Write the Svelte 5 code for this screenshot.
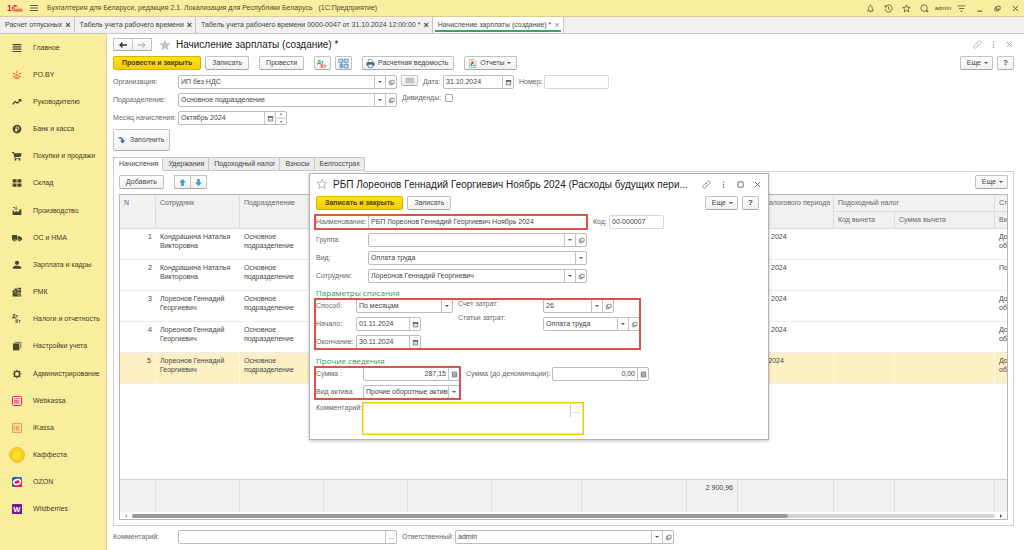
<script lang="ts">
	type Section = { icon: string; title: string };
	type Row = { employee: string; department: string; period: string; extra: string };

	const openTabs = [
		{ title: 'Расчет отпускных', active: false },
		{ title: 'Табель учета рабочего времени', active: false },
		{ title: 'Табель учета рабочего времени 0000-0047 от 31.10.2024 12:00:00 *', active: false },
		{ title: 'Начисление зарплаты (создание) *', active: true }
	];

	const sections: Section[] = [
		{ icon: 'menu', title: 'Главное' },
		{ icon: 'poby', title: 'PO.BY' },
		{ icon: 'trend', title: 'Руководителю' },
		{ icon: 'coin', title: 'Банк и касса' },
		{ icon: 'cart', title: 'Покупки и продажи' },
		{ icon: 'boxes', title: 'Склад' },
		{ icon: 'factory', title: 'Производство' },
		{ icon: 'truck', title: 'ОС и НМА' },
		{ icon: 'person', title: 'Зарплата и кадры' },
		{ icon: 'register', title: 'РМК' },
		{ icon: 'dtkt', title: 'Налоги и отчетность' },
		{ icon: 'books', title: 'Настройки учета' },
		{ icon: 'gear', title: 'Администрирование' },
		{ icon: 'webkassa', title: 'Webkassa' },
		{ icon: 'ikassa', title: 'iKassa' },
		{ icon: 'kaffesta', title: 'Каффеста' },
		{ icon: 'ozon', title: 'OZON' },
		{ icon: 'wildberries', title: 'Wildberries' }
	];

	const pageTabs = ['Начисления', 'Удержания', 'Подоходный налог', 'Взносы', 'Белгосстрах'];
	let currentTab = $state('Начисления');

	const rows: Row[] = [
		{ employee: 'Кондрашина Наталья Викторовна', department: 'Основное подразделение', period: 'Октябрь 2024', extra: 'До об' },
		{ employee: 'Кондрашина Наталья Викторовна', department: 'Основное подразделение', period: 'Октябрь 2024', extra: 'По' },
		{ employee: 'Лореонов Геннадий Георгиевич', department: 'Основное подразделение', period: 'Октябрь 2024', extra: 'До об' },
		{ employee: 'Лореонов Геннадий Георгиевич', department: 'Основное подразделение', period: 'Октябрь 2024', extra: 'До об' },
		{ employee: 'Лореонов Геннадий Георгиевич', department: 'Основное подразделение', period: 'Ноябрь 2024', extra: 'До об' }
	];
	let selectedRow = $state(4);
	let dividends = $state(false);
</script>

{#snippet sectionIcon(name: string)}
	<svg class="section-icon" class:large={name === 'kaffesta'} viewBox="0 0 16 16" aria-hidden="true">
		{#if name === 'menu'}
			<path d="M1 2.5h14M1 6.2h14M1 9.8h14M1 13.5h14" stroke="#4a452c" stroke-width="1.8" />
		{:else if name === 'poby'}
			<path d="M8 1v4M8 11v4M1.5 5l4 1.8M10.5 9.2l4 2M14.5 5l-4 1.8M5.5 9.2l-4 2M5 14l1.5-3M11 14l-1.5-3" stroke="#e0432d" stroke-width="1.5" fill="none" />
			<circle cx="8" cy="8" r="1.4" fill="#e0432d" />
		{:else if name === 'trend'}
			<path d="M1 12l4-5 3.5 3L14 4" stroke="#4a452c" stroke-width="2" fill="none" />
			<path d="M9.5 3H15v5.5z" fill="#4a452c" />
		{:else if name === 'coin'}
			<circle cx="8" cy="8" r="7" fill="#4a452c" />
			<path d="M6.5 12.5V4.5h2.3a2 2 0 0 1 0 4.2H5M5 10.6h4" stroke="#fbed9e" stroke-width="1.4" fill="none" />
		{:else if name === 'cart'}
			<path d="M0 1.5h3l.6 2h11.900l-1.800 6H5.200l.4 1.500h8v1.500H4.200L2 3H0z" fill="#4a452c" />
			<circle cx="5.500" cy="14" r="1.500" fill="#4a452c" />
			<circle cx="12" cy="14" r="1.500" fill="#4a452c" />
		{:else if name === 'boxes'}
			<path d="M1 2h6.300v5.300H1zM8.700 2H15v5.300H8.700zM1 8.700h6.300V14H1zM8.700 8.700H15V14H8.700z" fill="#4a452c" />
		{:else if name === 'factory'}
			<path d="M1 14.500V7h2l.5 3L8 7.500V10l4-2.500V5h3v9.500z" fill="#4a452c" />
			<path d="M2 2.500h3M6 1.500h2M4 4.800h5" stroke="#4a452c" stroke-width="1.500" />
		{:else if name === 'truck'}
			<path d="M0 3h8.500v8.500H0zM9.300 5H13l3 3v3.500H9.300z" fill="#4a452c" />
			<circle cx="4" cy="12" r="1.800" fill="#4a452c" stroke="#fbed9e" stroke-width=".6" />
			<circle cx="12" cy="12" r="1.800" fill="#4a452c" stroke="#fbed9e" stroke-width=".6" />
		{:else if name === 'person'}
			<circle cx="8" cy="4.500" r="3.300" fill="#4a452c" />
			<path d="M1.500 14v-2.500c1.500-2 3.500-2.500 4.500-2.500h4c1 0 3 .5 4.500 2.500V14z" fill="#4a452c" />
		{:else if name === 'register'}
			<path d="M1 5h3V2.500h4V5H9V1h5.500v14H1z" fill="#4a452c" />
			<path d="M3 7.500h4M10.500 3v3M12.500 3v3M3 10h1.500M6 10h1.500M9.500 9h3.500v4H9.500z" stroke="#fbed9e" stroke-width="1" fill="none" />
		{:else if name === 'dtkt'}
			<text x="0" y="7" font-size="8" font-weight="bold" fill="#4a452c">Дт</text>
			<text x="5" y="15" font-size="8" font-weight="bold" fill="#4a452c">Кт</text>
		{:else if name === 'books'}
			<path d="M5 1h10v11h-2V3H5z" fill="#8f8758" />
			<path d="M1.500 3.800h10.300V15H1.500z" fill="#4a452c" />
		{:else if name === 'gear'}
			<circle cx="8" cy="8" r="4.200" fill="none" stroke="#4a452c" stroke-width="2" />
			<path d="M8 1v3M8 12v3M1 8h3M12 8h3M3 3l2.200 2.200M10.800 10.800L13 13M13 3l-2.200 2.200M5.200 10.800L3 13" stroke="#4a452c" stroke-width="1.900" />
		{:else if name === 'webkassa'}
			<rect x=".8" y=".8" width="14.400" height="14.400" rx="2" fill="#fdebe9" stroke="#e8203c" stroke-width="1.600" />
			<path d="M3 4h10M3 7.500h7M3 10.500h7M4.500 6v7M8 6v7M11 6v7" stroke="#e8203c" stroke-width="1" />
		{:else if name === 'ikassa'}
			<rect x=".8" y=".8" width="14.400" height="14.400" rx="1" fill="#fbdf94" stroke="#e58a55" stroke-width="1.300" />
			<text x="5.500" y="12" font-size="11" fill="#e2703f">K</text>
			<path d="M3.300 4.500v8" stroke="#e2703f" stroke-width="1" />
		{:else if name === 'kaffesta'}
			<circle cx="8" cy="8" r="7.400" fill="#fbd51f" stroke="#e5b51a" stroke-width=".9" />
			<circle cx="8" cy="8" r="5" fill="#fde025" stroke="#edbd1b" stroke-width=".7" />
		{:else if name === 'ozon'}
			<rect width="16" height="16" rx="3" fill="#2558b8" />
			<path d="M16 8v5a3 3 0 0 1-3 3H5z" fill="#ee1c53" />
			<ellipse cx="8" cy="8" rx="7" ry="5.200" fill="#fff" transform="rotate(-18 8 8)" />
			<ellipse cx="8" cy="8" rx="4.500" ry="2.600" fill="#ee1c53" transform="rotate(-18 8 8)" />
		{:else if name === 'wildberries'}
			<rect width="16" height="16" rx="1" fill="#7b1a8e" />
			<path d="M11 16l5-6v6z" fill="#2f3a63" />
			<text x="2" y="12" font-size="12" font-weight="bold" fill="#fff">W</text>
		{/if}
	</svg>
{/snippet}

{#snippet caret()}
	<svg class="caret" viewBox="0 0 4 2" aria-hidden="true"><path d="M0 0h4L2 2z" fill="#555" /></svg>
{/snippet}

{#snippet openButton(title: string)}
	<button class="addon" aria-label="Открыть: {title}">
		<svg viewBox="0 0 8 8" aria-hidden="true">
			<path d="M3 1.500h4v3.500H3zM3 3H1.500v3.500H5V5" fill="none" stroke="#777" stroke-width=".9" />
		</svg>
	</button>
{/snippet}

{#snippet calendarButton()}
	<button class="addon" aria-label="Выбрать дату">
		<svg viewBox="0 0 8 8" aria-hidden="true">
			<path d="M1.500 2h5v4.800h-5z" fill="#fff" stroke="#666" stroke-width=".9" />
			<path d="M1 1.200h6v2H1z" fill="#666" />
			<path d="M2.500 4.800h3" stroke="#999" stroke-width=".8" />
		</svg>
	</button>
{/snippet}

{#snippet calculatorButton()}
	<button class="addon" aria-label="Калькулятор">
		<svg viewBox="0 0 8 8" aria-hidden="true">
			<path d="M1.500 1.300h5v5.400h-5z" fill="#ddd" stroke="#666" stroke-width=".9" />
			<path d="M1.500 2.200h5M2 4.200h4M2 5.600h4" stroke="#777" stroke-width=".8" />
		</svg>
	</button>
{/snippet}

{#snippet choice(id: string, value: string)}
	<span class="choice">
		<select {id}><option>{value}</option></select>
		<span class="choice-mark">{@render caret()}</span>
	</span>
{/snippet}

{#snippet linkIcon()}
	<svg class="tool-icon" viewBox="0 0 12 12" aria-hidden="true">
		<path d="M5 4.500l2.500-2.800c1-1 2-.6 2.700 0s1 1.700.1 2.700L8 6.800c-.9.900-1.900.8-2.600.1M7 7.500l-2.500 2.800c-1 1-2 .6-2.700 0s-1-1.700-.1-2.700L4 5.200c.9-.9 1.900-.8 2.600-.1" fill="none" stroke="currentColor" stroke-width=".9" />
	</svg>
{/snippet}

{#snippet moreIcon()}
	<svg class="tool-icon" viewBox="0 0 12 12" aria-hidden="true">
		<path d="M5.200 2h1.600v1.800H5.200zM5.200 5.200h1.600V7H5.200zM5.200 8.400h1.600v1.800H5.200z" fill="currentColor" />
	</svg>
{/snippet}

{#snippet crossIcon()}
	<svg class="tool-icon" viewBox="0 0 12 12" aria-hidden="true">
		<path d="M2.500 2.500l7 7M9.500 2.500l-7 7" stroke="currentColor" stroke-width="1.200" />
	</svg>
{/snippet}

<div class="app">
	<header class="titlebar">
		<svg class="logo" viewBox="0 0 32 16" role="img" aria-label="1С">
			<text x="0" y="14" font-size="17" font-weight="bold" fill="#d8232a">1</text>
			<path d="M21 5.500a5.500 5.500 0 1 0-4 8.300h14" fill="none" stroke="#d8232a" stroke-width="2" />
			<path d="M19 6.500a2.800 2.800 0 1 0-2 4h14" fill="none" stroke="#d8232a" stroke-width="1.500" />
		</svg>
		<button class="bare" aria-label="Главное меню">
			<svg class="burger" viewBox="0 0 8 8" aria-hidden="true"><path d="M0 1.500h8M0 4h8M0 6.500h8" stroke="#5a5233" stroke-width=".9" /></svg>
		</button>
		<span class="app-name">Бухгалтерия для Беларуси, редакция 2.1. Локализация для Республики Беларусь &nbsp; (1С:Предприятие)</span>
		<div class="title-tools">
			<button class="bare" aria-label="Уведомления">
				<svg class="tool-icon" viewBox="0 0 12 12"><path d="M2 9.300c1.500-1.300 1.500-2.500 1.800-4.500C4 3 5 2 6 2s2 1 2.200 2.800c.3 2 .3 3.200 1.800 4.500zM5 10.500h2M6 1v1" fill="none" stroke="currentColor" /></svg>
			</button>
			<button class="bare" aria-label="История">
				<svg class="tool-icon" viewBox="0 0 12 12"><path d="M2 3.500a4.800 4.800 0 1 1-.7 3M1.500 1.500v2.500H4M6 3.500v3l2 1.200" fill="none" stroke="currentColor" /></svg>
			</button>
			<button class="bare" aria-label="Избранное">
				<svg class="tool-icon" viewBox="0 0 12 12"><path d="M6 1.200l1.400 3.200 3.500.3-2.700 2.300.9 3.500L6 8.600l-3.100 1.900.9-3.500L1.100 4.700l3.500-.3z" fill="none" stroke="currentColor" /></svg>
			</button>
			<button class="bare" aria-label="Поиск">
				<svg class="tool-icon" viewBox="0 0 12 12"><circle cx="5.500" cy="5.500" r="4.300" fill="none" stroke="currentColor" /><path d="M8.500 8.500l2.300 2.300" stroke="currentColor" stroke-width="1.600" /></svg>
			</button>
			<span class="user">admin</span>
			<button class="bare" aria-label="Сервис">
				<svg class="tool-icon" viewBox="0 0 12 12"><path d="M1 2.500h10M2.500 6h7" stroke="currentColor" /><path d="M4.500 9h3L6 11z" fill="currentColor" /></svg>
			</button>
			<button class="bare" aria-label="Свернуть">
				<svg class="tool-icon" viewBox="0 0 12 12"><path d="M3 9.500h6.500" stroke="currentColor" stroke-width="1.300" /></svg>
			</button>
			<button class="bare" aria-label="Восстановить">
				<svg class="tool-icon" viewBox="0 0 12 12"><path d="M4.500 3h5v4h-5zM4.500 5h-2v4h5V7" fill="none" stroke="currentColor" /></svg>
			</button>
			<button class="bare" aria-label="Закрыть">{@render crossIcon()}</button>
		</div>
	</header>

	<nav class="open-tabs">
		{#each openTabs as tab}
			<div class="open-tab" class:active={tab.active}>
				<a href="#tab">{tab.title}</a>
				<button class="bare tab-close" aria-label="Закрыть">×</button>
			</div>
		{/each}
	</nav>

	<div class="workspace">
		<nav class="sidebar">
			{#each sections as section}
				<a class="section" href="#section">
					<span class="section-mark">{@render sectionIcon(section.icon)}</span>
					{section.title}
				</a>
			{/each}
		</nav>

		<main class="document">
			<div class="heading">
				<div class="joined">
					<button class="btn" aria-label="Назад">
						<svg class="nav-arrow" viewBox="0 0 8 6"><path d="M8 3H1M3.500.5L1 3l2.500 2.500" fill="none" stroke="#333" stroke-width="1.300" /></svg>
					</button>
					<button class="btn" aria-label="Вперед">
						<svg class="nav-arrow" viewBox="0 0 8 6"><path d="M0 3h7M4.500.5L7 3 4.500 5.500" fill="none" stroke="#999" /></svg>
					</button>
				</div>
				<svg class="star" viewBox="0 0 12 12" aria-hidden="true"><path d="M6 .5l1.600 3.800 4.100.3-3.100 2.700 1 4L6 9.200l-3.600 2.100 1-4L.3 4.600l4.100-.3z" fill="#c4c4c4" /></svg>
				<h1>Начисление зарплаты (создание) *</h1>
				<div class="form-tools">
					<button class="bare" aria-label="Ссылка">{@render linkIcon()}</button>
					<button class="bare" aria-label="Еще">{@render moreIcon()}</button>
					<button class="bare" aria-label="Закрыть">{@render crossIcon()}</button>
				</div>
			</div>

			<div class="commands">
				<button class="btn primary">Провести и закрыть</button>
				<button class="btn">Записать</button>
				<button class="btn spaced">Провести</button>
				<button class="btn square spaced" aria-label="Дт Кт">
					<svg viewBox="0 0 16 16"><text x="0" y="8" font-size="8" font-weight="bold" fill="#3a9a62">Дт</text><text x="5" y="15" font-size="8" font-weight="bold" fill="#d8453a">Кт</text></svg>
				</button>
				<button class="btn square" aria-label="Структура подчиненности">
					<svg viewBox="0 0 16 16"><path d="M1 1.500h6v5H1zM9 1.500h6v5H9zM9 9.500h6v5H9z" fill="#c3dcf0" stroke="#4b86b4" /><path d="M3 9h4v5H3zM7 4h2M12 6.500v3M5 6.500V9" fill="#7fb0d6" stroke="#4b86b4" /></svg>
				</button>
				<button class="btn spaced icon-text">
					<svg viewBox="0 0 16 16" aria-hidden="true"><path d="M4 1h6l2 2v3H4z" fill="#fff" stroke="#4d6478" /><path d="M1 6h14v6H1z" fill="#44617c" /><path d="M4 9.500h8V15H4z" fill="#e8f0f7" stroke="#44617c" /></svg>
					Расчетная ведомость
				</button>
				<button class="btn spaced icon-text">
					<svg viewBox="0 0 16 16" aria-hidden="true"><path d="M3 1h8l3 3v11H3z" fill="#fff" stroke="#888" /><path d="M5 8h2.500v5H5zM9 10h3v3H9z" fill="#3a9a62" /><path d="M6 4h4v5H6z" fill="#d8453a" /></svg>
					Отчеты {@render caret()}
				</button>
				<div class="commands-end">
					<button class="btn more">Еще {@render caret()}</button>
					<button class="btn square help">?</button>
				</div>
			</div>

			<div class="fields">
				<div class="line">
					<label class="lead" for="organization">Организация:</label>
					<div class="field ref">{@render choice('organization', 'ИП без НДС')}{@render openButton('Организация')}</div>
					<button class="btn mini" aria-label="Реквизиты">
						<svg viewBox="0 0 12 8"><path d="M1 1h10v6H1z" fill="#ddd" stroke="#aaa" stroke-width=".8" /><path d="M2.500 3h7M2.500 5h7" stroke="#999" stroke-width=".8" /></svg>
					</button>
					<label class="date-label" for="date">Дата:</label>
					<div class="field date"><input id="date" value="31.10.2024" />{@render calendarButton()}</div>
					<label class="number-label" for="number">Номер:</label>
					<div class="field number readonly"><input id="number" value="" readonly /></div>
				</div>
				<div class="line">
					<label class="lead" for="department">Подразделение:</label>
					<div class="field ref">{@render choice('department', 'Основное подразделение')}{@render openButton('Подразделение')}</div>
					<div class="check">
						<label for="dividends">Дивиденды:</label>
						<input id="dividends" type="checkbox" bind:checked={dividends} />
					</div>
				</div>
				<div class="line">
					<label class="lead" for="month">Месяц начисления:</label>
					<div class="field month">
						<input id="month" value="Октябрь 2024" />
						{@render calendarButton()}
						<button class="addon" aria-label="Изменить месяц">
							<svg viewBox="0 0 8 12"><path d="M3 2.500h2L4 1.500zM3 9.500h2l-1 1z" fill="#666" stroke="#666" stroke-width=".5" /><path d="M0 6h8" stroke="#bbb" /></svg>
						</button>
					</div>
				</div>
			</div>

			<button class="btn fill">
				<svg viewBox="0 0 16 16" aria-hidden="true"><path d="M1 3c5-2 10 0 10 6h3.500L9 15 4 9h3.200C7.200 6 5 4 1 6z" fill="#2f6fa8" /></svg>
				Заполнить
			</button>

			<div class="page-tabs" role="tablist">
				{#each pageTabs as tab}
					<button class="page-tab" role="tab" aria-selected={tab === currentTab} class:current={tab === currentTab} onclick={() => (currentTab = tab)}>{tab}</button>
				{/each}
			</div>

			<section class="panel">
				<div class="panel-commands">
					<button class="btn">Добавить</button>
					<div class="joined spaced">
						<button class="btn" aria-label="Вверх">
							<svg class="move" viewBox="0 0 8 8"><path d="M4 0l4 4H5.500v4h-3V4H0z" fill="#3f97d3" /></svg>
						</button>
						<button class="btn" aria-label="Вниз">
							<svg class="move" viewBox="0 0 8 8"><path d="M4 8L0 4h2.500V0h3v4H8z" fill="#3f97d3" /></svg>
						</button>
					</div>
					<div class="commands-end"><button class="btn more">Еще {@render caret()}</button></div>
				</div>

				<div class="grid-box">
					<table>
						<colgroup>
							<col class="col-n" />
							<col class="col-name" />
							<col class="col-name" />
							<col class="col-name" />
							<col class="col-name" />
							<col class="col-kind" />
							<col class="col-dates" />
							<col class="col-sum" />
							<col class="col-period" />
							<col class="col-code" />
							<col class="col-deduction" />
							<col />
						</colgroup>
						<thead>
							<tr>
								<th rowspan="2">N</th>
								<th rowspan="2">Сотрудник</th>
								<th rowspan="2">Подразделение</th>
								<th rowspan="2"></th>
								<th rowspan="2"></th>
								<th rowspan="2"></th>
								<th rowspan="2"></th>
								<th rowspan="2"></th>
								<th rowspan="2">Месяц налогового периода</th>
								<th colspan="2">Подоходный налог</th>
								<th>Ст</th>
							</tr>
							<tr>
								<th>Код вычета</th>
								<th>Сумма вычета</th>
								<th>Ви</th>
							</tr>
						</thead>
						<tbody>
							{#each rows as row, i}
								<tr class:selected={i === selectedRow} onclick={() => (selectedRow = i)}>
									<td class="num">{i + 1}</td>
									<td>{row.employee}</td>
									<td>{row.department}</td>
									<td></td>
									<td></td>
									<td></td>
									<td></td>
									<td></td>
									<td>{row.period}</td>
									<td></td>
									<td></td>
									<td>{row.extra}</td>
								</tr>
							{/each}
							<tr class="filler"><td colspan="12"></td></tr>
						</tbody>
						<tfoot>
							<tr>
								<td></td>
								<td></td>
								<td></td>
								<td></td>
								<td></td>
								<td></td>
								<td></td>
								<td class="num">2 900,96</td>
								<td></td>
								<td></td>
								<td></td>
								<td></td>
							</tr>
						</tfoot>
					</table>
					<div class="scroll">
						<svg viewBox="0 0 4 4" aria-hidden="true"><path d="M3 0v4L1 2z" fill="#aaa" /></svg>
						<div class="track"><div class="thumb"></div></div>
						<svg viewBox="0 0 4 4" aria-hidden="true"><path d="M1 0v4l2-2z" fill="#555" /></svg>
					</div>
				</div>
			</section>

			<div class="line">
				<label class="lead" for="note">Комментарий:</label>
				<div class="field ref"><input id="note" value="" /><button class="addon">...</button></div>
				<label class="owner-label" for="owner">Ответственный:</label>
				<div class="field ref">{@render choice('owner', 'admin')}{@render openButton('Ответственный')}</div>
			</div>
		</main>
	</div>

	<div class="dialog" role="dialog" aria-labelledby="dialog-title">
		<div class="dialog-title">
			<svg class="star" viewBox="0 0 12 12" aria-hidden="true"><path d="M6 1.200l1.400 3.200 3.500.3-2.700 2.300.9 3.500L6 8.600l-3.100 1.900.9-3.500L1.100 4.700l3.500-.3z" fill="none" stroke="#aaa" stroke-width=".8" /></svg>
			<h2 id="dialog-title">РБП Лореонов Геннадий Георгиевич Ноябрь 2024 (Расходы будущих пери...</h2>
			<div class="form-tools">
				<button class="bare" aria-label="Ссылка">{@render linkIcon()}</button>
				<button class="bare" aria-label="Еще">{@render moreIcon()}</button>
				<button class="bare" aria-label="Развернуть">
					<svg class="tool-icon" viewBox="0 0 12 12"><path d="M2.500 2.500h7v7h-7z" fill="none" stroke="currentColor" stroke-width="1.200" /></svg>
				</button>
				<button class="bare" aria-label="Закрыть">{@render crossIcon()}</button>
			</div>
		</div>

		<div class="dialog-commands">
			<button class="btn primary">Записать и закрыть</button>
			<button class="btn">Записать</button>
			<div class="commands-end">
				<button class="btn more">Еще {@render caret()}</button>
				<button class="btn square help">?</button>
			</div>
		</div>

		<div class="fields">
			<div class="line">
				<div class="line marked">
					<label class="dialog-lead" for="name">Наименование:</label>
					<div class="field ref"><input id="name" value="РБП Лореонов Геннадий Георгиевич Ноябрь 2024" /></div>
				</div>
				<label class="code-label" for="code">Код:</label>
				<div class="field code readonly"><input id="code" value="00-000007" readonly /></div>
			</div>
			<div class="line">
				<label class="dialog-lead" for="group">Группа:</label>
				<div class="field ref">{@render choice('group', '')}{@render openButton('Группа')}</div>
			</div>
			<div class="line">
				<label class="dialog-lead" for="kind">Вид:</label>
				<div class="field ref">{@render choice('kind', 'Оплата труда')}</div>
			</div>
			<div class="line">
				<label class="dialog-lead" for="employee">Сотрудник:</label>
				<div class="field ref">{@render choice('employee', 'Лореонов Геннадий Георгиевич')}{@render openButton('Сотрудник')}</div>
			</div>
		</div>

		<h3>Параметры списания</h3>
		<div class="params marked">
			<div class="fields params-left">
				<div class="line">
					<label class="param-lead" for="method">Способ:</label>
					<div class="field medium">{@render choice('method', 'По месяцам')}</div>
				</div>
				<div class="line">
					<label class="param-lead" for="start">Начало:</label>
					<div class="field short"><input id="start" value="01.11.2024" />{@render calendarButton()}</div>
				</div>
				<div class="line">
					<label class="param-lead" for="finish">Окончание:</label>
					<div class="field short"><input id="finish" value="30.11.2024" />{@render calendarButton()}</div>
				</div>
			</div>
			<div class="fields params-labels">
				<label for="account">Счет затрат:</label>
				<label for="item">Статьи затрат:</label>
			</div>
			<div class="fields">
				<div class="field account">{@render choice('account', '26')}{@render openButton('Счет затрат')}</div>
				<div class="field medium">{@render choice('item', 'Оплата труда')}{@render openButton('Статьи затрат')}</div>
			</div>
		</div>

		<h3>Прочие сведения</h3>
		<div class="other">
			<div class="fields marked">
				<div class="line">
					<label class="other-lead" for="amount">Сумма :</label>
					<div class="field medium amount"><input id="amount" value="287,15" />{@render calculatorButton()}</div>
				</div>
				<div class="line">
					<label class="other-lead" for="asset">Вид актива:</label>
					<div class="field medium">{@render choice('asset', 'Прочие оборотные активы')}</div>
				</div>
			</div>
			<div class="line">
				<label class="old-label" for="old-amount">Сумма (до деноминации):</label>
				<div class="field medium amount"><input id="old-amount" value="0,00" />{@render calculatorButton()}</div>
			</div>
		</div>

		<div class="comment">
			<label for="comment">Комментарий:</label>
			<div class="comment-field">
				<textarea id="comment"></textarea>
				<button class="addon">...</button>
			</div>
		</div>
	</div>
</div>

<style>
	:global(body) {
		background: #fff;
	}

	.app,
	.app * {
		box-sizing: border-box;
	}

	.app {
		position: relative;
		display: flex;
		flex-direction: column;
		min-height: 100vh;
		overflow: hidden;
		font-family: 'Liberation Sans', Arial, sans-serif;
		font-size: 7px;
		line-height: 10px;
		color: #444;
	}

	button,
	input,
	select,
	textarea {
		font: inherit;
		color: inherit;
		margin: 0;
		padding: 0;
		border: 0;
		background: none;
		outline: none;
	}

	button {
		cursor: pointer;
	}

	a {
		color: inherit;
		text-decoration: none;
	}

	h1,
	h2,
	h3 {
		margin: 0;
		font-weight: normal;
	}

	svg {
		display: block;
		flex: none;
	}

	label {
		flex: none;
		color: #666;
		white-space: nowrap;
	}

	/* title bar */
	.titlebar {
		display: flex;
		align-items: center;
		height: 17px;
		padding: 0 4px 0 7px;
		background: #fbed9e;
		border-bottom: 1px solid #d9cd8c;
		color: #4f482a;
	}

	.logo {
		width: 16px;
		height: 8px;
		margin-right: 7px;
	}

	.burger {
		width: 8px;
		height: 8px;
	}

	.app-name {
		margin-left: 9px;
		white-space: nowrap;
	}

	.title-tools {
		display: flex;
		align-items: center;
		gap: 9px;
		margin-left: auto;
	}

	.user {
		margin: 0 -3px;
		font-size: 6px;
	}

	.tool-icon {
		width: 9px;
		height: 9px;
	}

	/* open windows */
	.open-tabs {
		display: flex;
		height: 17px;
		background: #f0f0f0;
		border-bottom: 1px solid #c6c6c6;
	}

	.open-tab {
		display: flex;
		align-items: center;
		gap: 3px;
		padding: 0 3px 0 5px;
		border-right: 1px solid #c6c6c6;
		white-space: nowrap;
	}

	.tab-close {
		font-size: 9px;
		font-weight: bold;
	}

	.open-tab.active {
		background: linear-gradient(#2fa866, #2fa866) center 13px / calc(100% - 4px) 2px no-repeat #fff;
	}

	.open-tab.active .tab-close {
		font-weight: normal;
		color: #888;
	}

	.workspace {
		display: flex;
		flex: 1;
	}

	/* sections */
	.sidebar {
		display: grid;
		grid-auto-rows: 1fr;
		flex: none;
		width: 107px;
		padding-bottom: 27px;
		background: #fbed9e;
		border-right: 1px solid #e2d68b;
		color: #423c20;
	}

	.section {
		display: flex;
		align-items: center;
		white-space: nowrap;
	}

	.section-mark {
		display: flex;
		justify-content: center;
		width: 33px;
	}

	.section-icon {
		width: 10px;
		height: 10px;
	}

	.section-icon.large {
		width: 16px;
		height: 16px;
	}

	/* document form */
	.document {
		display: flex;
		flex: 1;
		flex-direction: column;
		min-width: 0;
		padding: 4px 10px 6px 6px;
	}

	.heading {
		display: flex;
		align-items: center;
		height: 13px;
	}

	.joined {
		display: flex;
	}

	.joined .btn {
		width: 20px;
		height: 13px;
		padding: 0;
		border-radius: 1px 0 0 1px;
	}

	.joined .btn + .btn {
		margin-left: -1px;
		border-radius: 0 1px 1px 0;
	}

	.nav-arrow {
		width: 8px;
		height: 6px;
	}

	.star {
		width: 12px;
		height: 12px;
	}

	.heading .star {
		margin: 0 5px 0 7px;
	}

	h1,
	h2 {
		font-size: 10px;
		line-height: 13px;
		color: #222;
		white-space: nowrap;
	}

	.form-tools {
		display: flex;
		gap: 7px;
		margin-left: auto;
		color: #999;
	}

	.btn {
		display: flex;
		align-items: center;
		justify-content: center;
		gap: 3px;
		height: 14px;
		padding: 0 6px;
		border: 1px solid #c2c2c2;
		border-bottom-color: #a8a8a8;
		border-radius: 2px;
		background: linear-gradient(#fff, #f0f0f0);
		white-space: nowrap;
	}

	.btn.primary {
		padding: 0 8px;
		border-color: #d8b400;
		background: linear-gradient(#ffe21a, #f5cd00);
		font-weight: bold;
		color: #4a4000;
	}

	.btn.square {
		width: 17px;
		padding: 0;
	}

	.square svg {
		width: 11px;
		height: 11px;
	}

	.btn.help {
		font-size: 8px;
		font-weight: bold;
	}

	.btn.icon-text {
		padding: 0 5px 0 3px;
	}

	.icon-text svg:first-child {
		width: 9px;
		height: 9px;
	}

	.caret {
		width: 4px;
		height: 2px;
	}

	.commands,
	.dialog-commands,
	.panel-commands {
		display: flex;
		gap: 4px;
	}

	.commands {
		margin: 5px 0;
	}

	.spaced {
		margin-left: 6px;
	}

	.commands-end {
		display: flex;
		gap: 4px;
		margin-left: auto;
	}

	.btn.more {
		padding: 0 4px 0 6px;
	}

	.fields {
		display: flex;
		flex-direction: column;
		gap: 4px;
	}

	.line {
		display: flex;
		align-items: center;
		height: 14px;
	}

	.lead {
		width: 65px;
	}

	.field {
		display: flex;
		flex: none;
		height: 14px;
		border: 1px solid #bcbcbc;
		border-radius: 2px;
		background: #fff;
	}

	.field.readonly {
		border-color: #d9d9d9;
	}

	.field input {
		flex: 1;
		width: 0;
		padding: 0 2px;
	}

	.amount input {
		text-align: right;
	}

	.ref {
		width: 219px;
	}

	.date {
		width: 71px;
	}

	.number {
		width: 65px;
	}

	.month {
		width: 109px;
	}

	.medium {
		width: 97px;
	}

	.short {
		width: 65px;
	}

	.account {
		width: 71px;
	}

	.code {
		width: 55px;
	}

	.choice {
		display: grid;
		flex: 1;
		min-width: 0;
	}

	.choice select {
		grid-area: 1 / 1;
		min-width: 0;
		padding: 0 11px 0 2px;
		appearance: none;
	}

	.choice-mark {
		display: flex;
		grid-area: 1 / 1;
		align-items: center;
		justify-content: center;
		justify-self: end;
		width: 11px;
		border-left: 1px solid #c4c4c4;
		pointer-events: none;
	}

	.addon {
		display: flex;
		flex: none;
		align-items: center;
		justify-content: center;
		width: 11px;
		border-left: 1px solid #c4c4c4;
	}

	.addon svg {
		width: 7px;
		height: 7px;
	}

	.month .addon:last-child svg {
		width: 8px;
		height: 12px;
	}

	.btn.mini {
		align-self: flex-start;
		width: 17px;
		height: 11px;
		margin: 0 5px 0 4px;
		padding: 0;
	}

	.mini svg {
		width: 10px;
		height: 7px;
	}

	.date-label {
		width: 20px;
	}

	.number-label {
		width: 30px;
		padding-left: 5px;
	}

	.check {
		display: flex;
		align-items: center;
		gap: 4px;
		height: 10px;
		margin-left: 5px;
		align-self: flex-start;
	}

	.check input {
		width: 8px;
		height: 8px;
		border: 1px solid #aaa;
		border-radius: 1px;
		appearance: none;
	}

	.check input:checked {
		background: #666;
	}

	.btn.fill {
		align-self: flex-start;
		gap: 4px;
		height: 22px;
		margin: 4px 0 6px;
		padding: 0 5px 0 4px;
	}

	.fill svg {
		width: 8px;
		height: 8px;
	}

	/* tabs and table */
	.page-tabs {
		display: flex;
		height: 14px;
	}

	.page-tab {
		padding: 0 4px 0 5px;
		border: 1px solid #c8c8c8;
		border-left: 0;
		background: #ebebeb;
	}

	.page-tab:first-child {
		border-left: 1px solid #c8c8c8;
	}

	.page-tab.current {
		border-bottom-color: #fff;
		background: #fff;
	}

	.panel {
		display: flex;
		flex: 1;
		flex-direction: column;
		margin-bottom: 4px;
		padding: 4px 5px 5px;
		border: 1px solid #d2d2d2;
		border-top: 0;
		background: linear-gradient(#d2d2d2, #d2d2d2) right top / calc(100% - 250px) 1px no-repeat;
	}

	.panel-commands .joined .btn {
		width: 17px;
		height: 14px;
	}

	.move {
		width: 7px;
		height: 7px;
	}

	.grid-box {
		display: flex;
		flex: 1;
		flex-direction: column;
		margin-top: 5px;
		border: 1px solid #b8b8b8;
		overflow: hidden;
	}

	table {
		flex: 1;
		width: 100%;
		table-layout: fixed;
		border-collapse: separate;
		border-spacing: 0;
	}

	.col-n {
		width: 36px;
	}

	.col-name {
		width: 84px;
	}

	.col-kind {
		width: 90px;
	}

	.col-dates {
		width: 105px;
	}

	.col-sum {
		width: 51px;
	}

	.col-period {
		width: 96px;
	}

	.col-code {
		width: 61px;
	}

	.col-deduction {
		width: 100px;
	}

	th,
	td {
		padding: 3px 4px 0;
		text-align: left;
		vertical-align: top;
		overflow: hidden;
	}

	th {
		height: 17px;
		border-right: 1px solid #dcdcdc;
		border-bottom: 1px solid #dcdcdc;
		background: #f1f1f1;
		font-weight: normal;
		color: #666;
		white-space: nowrap;
	}

	tbody td {
		height: 31px;
		border-bottom: 1px solid #ececec;
		line-height: 9px;
	}

	th:last-child,
	td:last-child {
		padding-right: 0;
	}

	tr > :last-child {
		border-right: 0;
	}

	.selected td {
		border-right: 1px solid #fff8e0;
		background: #fdf0c4;
	}

	.selected td:last-child {
		border-right: 0;
	}

	.filler td {
		height: auto;
		border: 0;
	}

	.num {
		text-align: right;
	}

	tfoot td {
		height: 33px;
		border-top: 1px solid #d2d2d2;
		border-right: 1px solid #dfdfdf;
		background: #f1f1f1;
	}

	.scroll {
		display: flex;
		align-items: center;
		gap: 4px;
		height: 7px;
		padding: 0 4px;
	}

	.scroll svg {
		width: 4px;
		height: 4px;
	}

	.track {
		flex: 1;
		height: 4px;
		border-radius: 2px;
		background: #d4d4d4;
	}

	.thumb {
		width: 76%;
		height: 4px;
		border-radius: 2px;
		background: #999;
	}

	.owner-label {
		width: 58px;
		padding-left: 5px;
	}

	/* item window */
	.dialog {
		position: absolute;
		top: 173px;
		left: 309px;
		width: 460px;
		padding: 0 6px 4px;
		border: 1px solid #b4b4b4;
		background: #fff;
		box-shadow: 0 1px 3px rgba(0, 0, 0, 0.25);
	}

	.dialog-title {
		display: flex;
		align-items: center;
		gap: 5px;
		height: 20px;
	}

	.dialog-title .form-tools {
		gap: 8px;
		color: #666;
	}

	.dialog-commands {
		margin: 2px 3px 5px 0;
	}

	.dialog-lead {
		width: 52px;
	}

	.code-label {
		width: 22px;
		padding-left: 6px;
	}

	h3 {
		padding-top: 3px;
		font-family: 'Open Sans', 'Noto Sans', sans-serif;
		font-size: 8px;
		line-height: 13px;
		color: #2f9a58;
	}

	/* red frame round the fields to be filled in */
	.marked {
		position: relative;
	}

	.marked::after {
		content: '';
		position: absolute;
		inset: -1px -1px -1px -2px;
		border: 2px solid #d9534a;
		pointer-events: none;
	}

	.params {
		display: flex;
		width: fit-content;
		margin-bottom: 2px;
	}

	.params-left {
		width: 142px;
	}

	.params-labels {
		width: 85px;
	}

	.param-lead {
		width: 40px;
	}

	.other {
		display: flex;
		gap: 6px;
	}

	.other-lead {
		width: 47px;
	}

	.old-label {
		width: 86px;
	}

	.comment {
		display: flex;
		margin-top: 3px;
	}

	.comment label {
		width: 46px;
		line-height: 12px;
	}

	.comment-field {
		display: flex;
		width: 222px;
		height: 33px;
		border: 1px solid #f0c800;
		box-shadow: inset 0 0 0 1px #fbe88a;
	}

	.comment-field textarea {
		flex: 1;
		min-width: 0;
		padding: 2px;
		resize: none;
	}

	.comment-field .addon {
		height: 12px;
		margin: 2px 2px 0 0;
		color: #888;
	}
</style>
